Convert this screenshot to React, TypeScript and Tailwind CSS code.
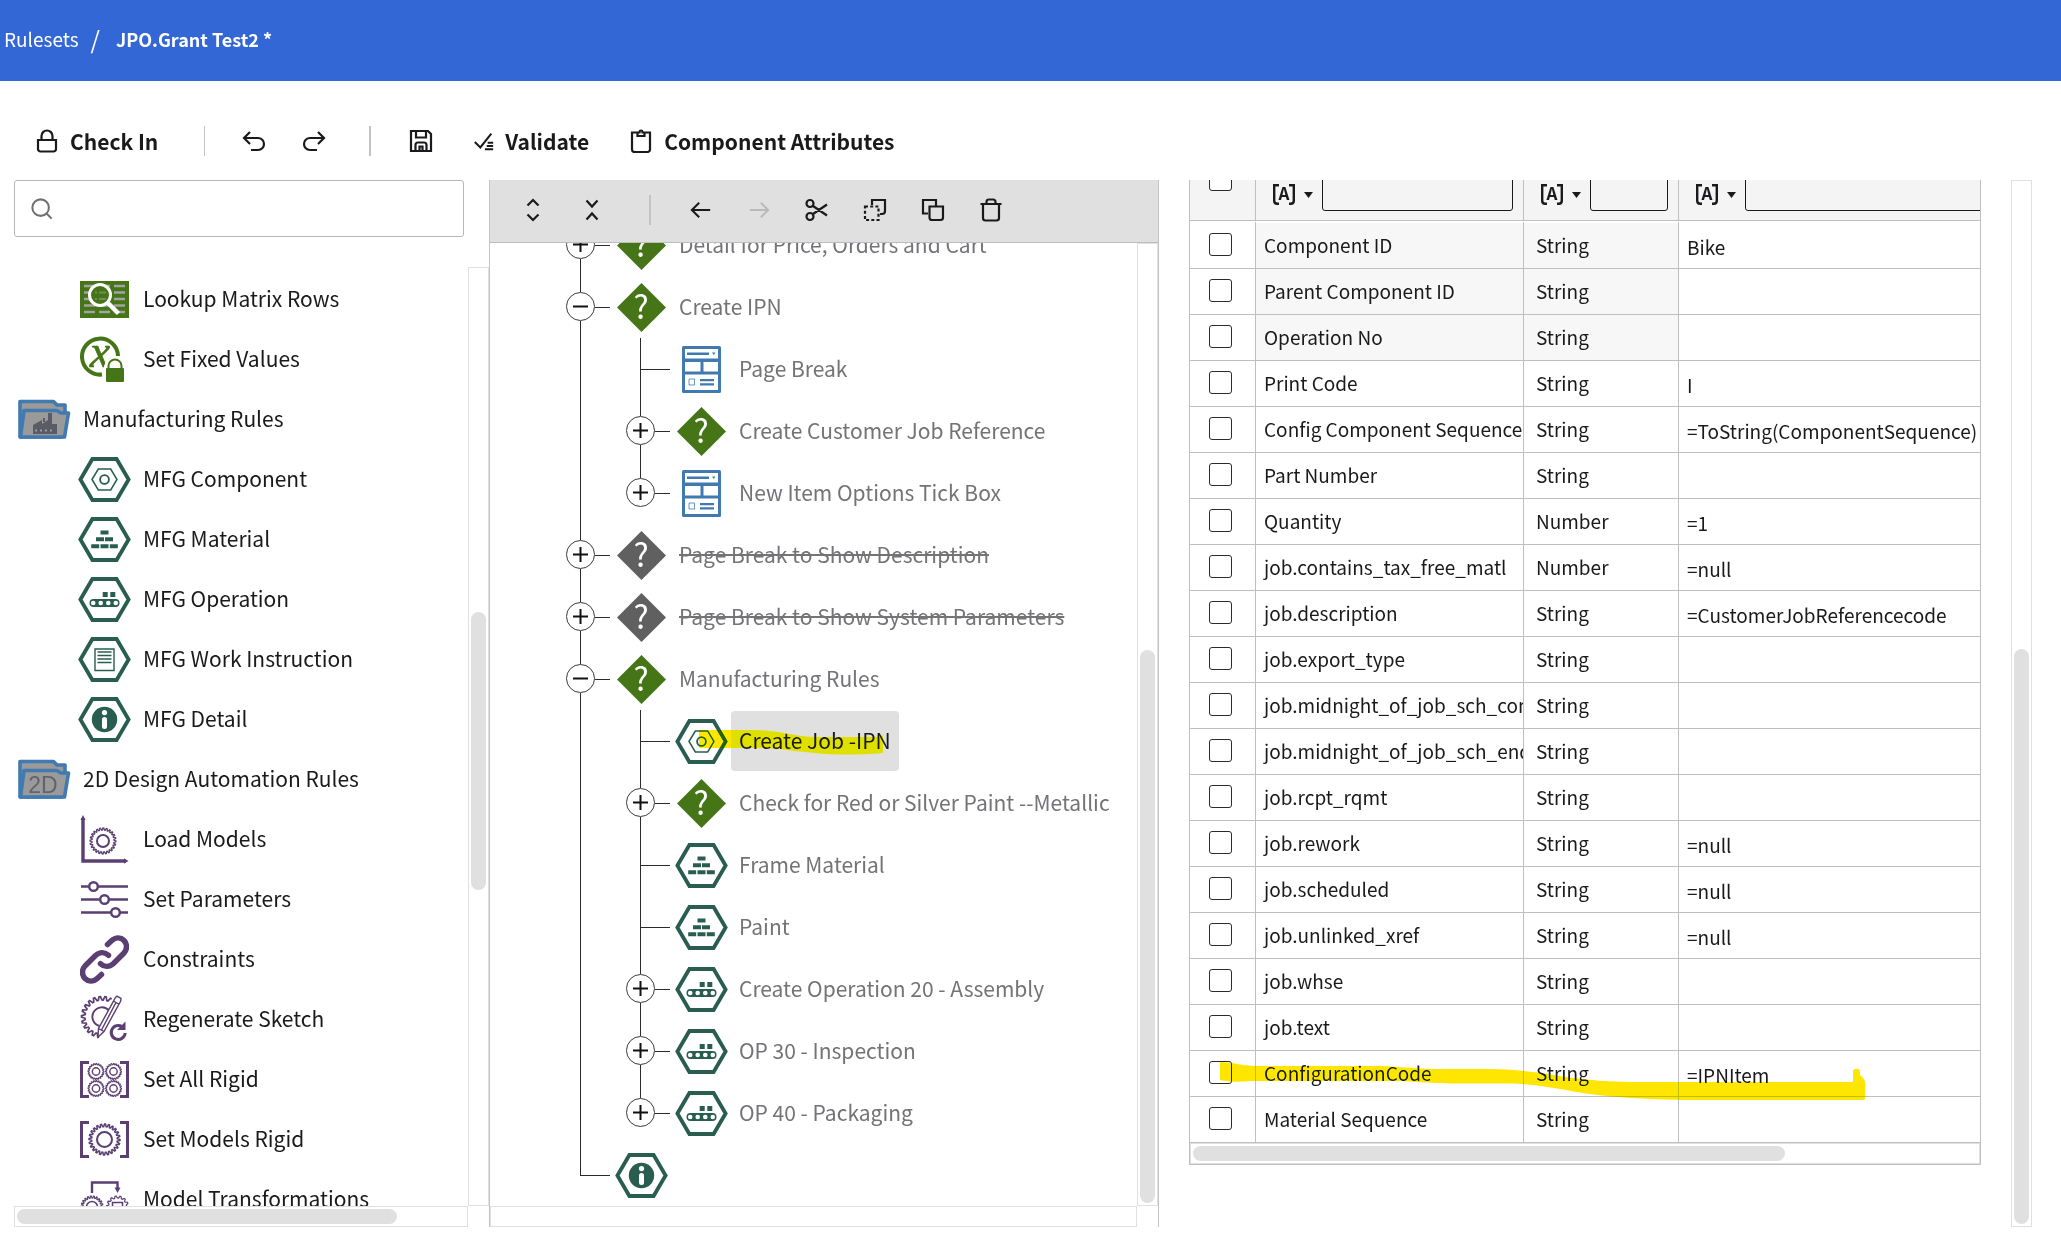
import { Fragment } from 'react';
import type { ReactNode } from 'react';

type IconName =
  | 'lookup'
  | 'fixed'
  | 'mfgFolder'
  | 'component'
  | 'material'
  | 'operation'
  | 'instruction'
  | 'detail'
  | 'designFolder'
  | 'load'
  | 'parameters'
  | 'constraints'
  | 'regenerate'
  | 'allRigid'
  | 'modelsRigid'
  | 'transform'
  | 'question'
  | 'questionOff'
  | 'page';

const GREEN = '#457516';
const TEAL = '#285d50';
const PURPLE = '#5b3f73';
const BLUE = '#417ab0';

function gearPath(
  cx: number,
  cy: number,
  outer: number,
  inner: number,
  teeth: number,
  from = 0,
  to = 360,
) {
  const step = 360 / (teeth * 4);
  const points: string[] = [];
  for (let i = 0; from + i * step <= to + 0.01; i++) {
    const angle = ((from + i * step) * Math.PI) / 180;
    const r = i % 4 < 2 ? outer : inner;
    points.push(
      `${(cx + r * Math.cos(angle)).toFixed(2)} ${(cy + r * Math.sin(angle)).toFixed(2)}`,
    );
  }
  return `M${points.join('L')}${to - from === 360 ? 'Z' : ''}`;
}

function Hexagon({ children }: { children: ReactNode }) {
  return (
    <svg width="53" height="45" viewBox="0 0 53 45" fill={TEAL}>
      <path
        d="M2.4 22.5 14.4 2h24.2l12 20.5-12 20.5H14.4Z"
        fill="#fff"
        stroke={TEAL}
        strokeWidth="3.8"
      />
      {children}
    </svg>
  );
}

function Folder({ children }: { children: ReactNode }) {
  return (
    <svg width="53" height="40" viewBox="0 0 53 40">
      <g fill="#9a9a9a" stroke={BLUE} strokeWidth="3.6" strokeLinejoin="round">
        <path d="M2 38V2.500h33.500l3.500 3.500h8v8l-3 24Z" />
        <path d="M6 11.500h32.500l4.500 2.500h7.500L46.500 38H2.500Z" />
      </g>
      {children}
    </svg>
  );
}

function Diamond({ fill }: { fill: string }) {
  return (
    <svg width="49" height="49" viewBox="0 0 49 49">
      <path d="M24.500 0 49 24.500 24.500 49 0 24.500Z" fill={fill} />
      <text
        x="24"
        y="36"
        fontSize="32"
        fill="#fff"
        textAnchor="middle"
        fontFamily="'Noto Sans CJK SC', sans-serif"
      >
        ?
      </text>
    </svg>
  );
}

function Brackets({ children }: { children: ReactNode }) {
  return (
    <svg width="49" height="37" viewBox="0 0 49 37" fill="none" stroke={PURPLE}>
      <path d="M9 1.500H1.500v34H9M40 1.500h7.500v34H40" strokeWidth="3" />
      {children}
    </svg>
  );
}

function RuleIcon({ name }: { name: IconName }) {
  switch (name) {
    case 'lookup':
      return (
        <svg width="49" height="37" viewBox="0 0 49 37">
          <path d="M0 0h49v37H0Z" fill={GREEN} />
          <path
            d="M4 5h11M19 5h11M34 5h11M4 11.500h11M19 11.500h11M34 11.500h11M4 18h11M19 18h11M34 18h11M4 24.500h11M19 24.500h11M34 24.500h11M4 31h11M19 31h11M34 31h11"
            stroke="#a3a3a3"
            strokeWidth="2.400"
          />
          <circle cx="20" cy="14" r="10.500" fill={GREEN} stroke="#fff" strokeWidth="3" />
          <path d="M15 11.500h2M19 11.500h7M15 18h2M19 18h7" stroke="#a3a3a3" strokeWidth="2" opacity="0.5" />
          <path d="m27.500 21.500 11 11" stroke="#fff" strokeWidth="4.500" />
        </svg>
      );
    case 'fixed':
      return (
        <svg width="49" height="46" viewBox="0 0 49 46">
          <path
            d="M38 20A18 18 0 1 0 22 38.500"
            fill="none"
            stroke={GREEN}
            strokeWidth="4"
          />
          <text
            x="20"
            y="31"
            fontSize="46"
            fontStyle="italic"
            fill={GREEN}
            stroke={GREEN}
            strokeWidth="0.600"
            textAnchor="middle"
            fontFamily="'Liberation Serif', serif"
          >
            x
          </text>
          <path d="M24 30q2-8 10-9 9 1 10 9v16H24Z" fill="#fff" />
          <path
            d="M28.500 33v-3a6.500 6.500 0 0 1 13 0v3"
            fill="none"
            stroke={GREEN}
            strokeWidth="2"
          />
          <rect x="26" y="32" width="18" height="14" rx="1" fill={GREEN} />
        </svg>
      );
    case 'mfgFolder':
      return (
        <Folder>
          <path
            d="M15 35V26l9-5v4l6-4V14h4v11h5v10ZM25 19h2v4h-2Z"
            fill="#5b5b66"
          />
          <path d="M17 31.500h18" stroke="#9a9a9a" strokeWidth="2" strokeDasharray="2 3" />
        </Folder>
      );
    case 'designFolder':
      return (
        <Folder>
          <text
            x="25"
            y="34"
            fontSize="23"
            fill="#63636b"
            textAnchor="middle"
            fontFamily="'Liberation Sans', sans-serif"
          >
            2D
          </text>
        </Folder>
      );
    case 'component':
      return (
        <Hexagon>
          <path
            d="M14 22.500 20.300 12h12.400L39 22.500 32.700 33H20.300Z"
            fill="none"
            stroke={TEAL}
            strokeWidth="1.500"
          />
          <circle cx="26.500" cy="22.500" r="4.400" fill="none" stroke={TEAL} strokeWidth="1.800" />
        </Hexagon>
      );
    case 'material':
      return (
        <Hexagon>
          <path d="M22.500 13.500h8v4h-8ZM18 20.300h8v4h-8ZM27 20.300h8v4h-8ZM13.200 27.200h8v4h-8ZM22.500 27.200h8v4h-8ZM31.800 27.200h8v4h-8Z" />
        </Hexagon>
      );
    case 'operation':
      return (
        <Hexagon>
          <path d="M24.700 15h5v5h-5ZM32.300 15h5v5h-5Z" />
          <rect x="11.500" y="22" width="30" height="8" rx="4" />
          <g fill="#fff">
            <circle cx="15.200" cy="26" r="2.300" />
            <circle cx="22.700" cy="26" r="2.300" />
            <circle cx="30.300" cy="26" r="2.300" />
            <circle cx="37.800" cy="26" r="2.300" />
          </g>
        </Hexagon>
      );
    case 'instruction':
      return (
        <Hexagon>
          <path
            d="M17 12h19v21.500H17ZM19.500 15h14M19.500 18.500h14M19.500 22h14M19.500 25.500h14"
            fill="none"
            stroke={TEAL}
            strokeWidth="1.400"
          />
        </Hexagon>
      );
    case 'detail':
      return (
        <Hexagon>
          <circle cx="26.500" cy="22.500" r="12.700" />
          <circle cx="26.500" cy="15.600" r="2.600" fill="#fff" />
          <rect x="24" y="20" width="5" height="12" rx="2.500" fill="#fff" />
        </Hexagon>
      );
    case 'load':
      return (
        <svg width="49" height="49" viewBox="0 0 49 49" fill="none" stroke={PURPLE}>
          <path d="M3 3v43h42" strokeWidth="3.400" />
          <path d="M0.500 5 3 0l2.500 5ZM44 43.200l4.500 2.800-4.500 2.800Z" fill={PURPLE} stroke="none" />
          <path d={gearPath(23, 26, 13, 11, 24)} strokeWidth="1.300" />
          <circle cx="23" cy="26" r="6" strokeWidth="2" />
        </svg>
      );
    case 'parameters':
      return (
        <svg width="49" height="37" viewBox="0 0 49 37" stroke={PURPLE}>
          <path d="M1 5.500h47M1 18.500h47M1 31.500h47" strokeWidth="2.400" />
          <g fill="#fff" strokeWidth="2.400">
            <circle cx="13.500" cy="5.500" r="4.300" />
            <circle cx="24.500" cy="18.500" r="4.300" />
            <circle cx="35.500" cy="31.500" r="4.300" />
          </g>
        </svg>
      );
    case 'constraints':
      return (
        <svg
          width="49"
          height="49"
          viewBox="0 0 49 49"
          fill="none"
          stroke={PURPLE}
          strokeWidth="5.500"
          strokeLinecap="round"
        >
          <path d="m27.500 9.500 4-3.700c4.500-4 9.500-3.300 12.500-.300 3.500 3.700 3.200 9 0 12.500L33.500 28.500c-4.500 4-9.500 3.500-13 .200" />
          <path d="m21.500 39.500-4 3.700c-4.500 4-9.500 3.300-12.500.300-3.500-3.700-3.200-9 0-12.500L15.500 20.500c4.500-4 9.500-3.500 13-.200" />
        </svg>
      );
    case 'regenerate':
      return (
        <svg width="49" height="49" viewBox="0 0 49 49" fill="none" stroke={PURPLE}>
          <path d={gearPath(22, 22, 20.500, 17, 22, 98, 302)} strokeWidth="1.700" />
          <path d="M29 15.500a9.500 9.500 0 1 0-9.500 15.500" strokeWidth="1.900" />
          <path
            d="m35.500 2.500 1.500-1.300 4 2.300-.300 2.500L24 36.500l-6 5.500.500-8.500ZM33.500 6l5 3M18.500 33.500l5.500 3M36 7.500 21.500 35"
            fill="#fff"
            strokeWidth="1.400"
          />
          <path d="M44 33.500a7 7 0 1 0 1.200 4.500" strokeWidth="3" />
          <path d="M45.500 26.500v8.500H37Z" fill={PURPLE} stroke="none" />
        </svg>
      );
    case 'allRigid':
      return (
        <Brackets>
          {[
            [16, 10.5],
            [33.5, 10.5],
            [16, 27.5],
            [33.5, 27.5],
          ].map(([x, y]) => (
            <Fragment key={`${x}-${y}`}>
              <path d={gearPath(x, y, 8, 6.8, 20)} strokeWidth="1.100" />
              <circle cx={x} cy={y} r="3.700" strokeWidth="1.400" />
            </Fragment>
          ))}
        </Brackets>
      );
    case 'modelsRigid':
      return (
        <Brackets>
          <path d={gearPath(24.5, 18.5, 15.5, 12.8, 24)} strokeWidth="1.500" />
          <circle cx="24.500" cy="18.500" r="7.500" strokeWidth="2" />
        </Brackets>
      );
    case 'transform':
      return (
        <svg width="49" height="37" viewBox="0 0 49 37" fill="none" stroke={PURPLE}>
          <path d="M12 12V1.500h25.500V8" strokeWidth="2.400" />
          <path d="M34.500 6.500h6l-3 5.500Z" fill={PURPLE} stroke="none" />
          <path d={gearPath(12, 26, 11, 9, 22)} strokeWidth="1.200" />
          <circle cx="12" cy="26" r="5.500" strokeWidth="1.500" />
          <path d={gearPath(37.5, 26, 11, 9, 14)} strokeWidth="1.200" />
          <path d="M32.500 21.500h10v10h-10Z" strokeWidth="1.500" />
        </svg>
      );
    case 'question':
      return <Diamond fill={GREEN} />;
    case 'questionOff':
      return <Diamond fill="#606060" />;
    case 'page':
      return (
        <svg width="39" height="47" viewBox="0 0 39 47" fill={BLUE}>
          <rect width="39" height="47" rx="1.500" />
          <path
            d="M3 3h33v9.500H3ZM3 16h15.500v9.500H3ZM21.500 16H36v9.500H21.500ZM3 28.500h33V44H3Z"
            fill="#fff"
          />
          <path d="M5 6.500h22v2.500H5ZM30 6.500h3.500l-1.700 2.500ZM18 33h14v2.200H18ZM18 37.200h14v2.200H18Z" />
          <path d="M7 33h5.500v6H7Z" fill="none" stroke={BLUE} strokeWidth="0.800" />
        </svg>
      );
  }
}

const strokeIcons = {
  lock: 'M3 11h18v9a2.500 2.500 0 0 1-2.500 2.500h-13A2.500 2.500 0 0 1 3 20ZM6.500 11V7a5.500 5.500 0 0 1 11 0v4',
  undo: 'M8 3 2 9l6 6M2 9h14a6 6 0 0 1 0 12H9',
  redo: 'm16 3 6 6-6 6M22 9H8a6 6 0 0 0 0 12h7',
  save: 'M2 2h17l3 3v17H2ZM7 2v6.500h10V2M6.500 22v-6q0-2.500 2.500-2.500h6q2.500 0 2.500 2.500v6M10.500 17.500h3V22h-3Z',
  validate: 'm2 13 6 6L20 4M16 14h6M15 17.500h7M13 21h9',
  clipboard: 'M8.500 3.500H3v17A2.500 2.500 0 0 0 5.500 23h13a2.500 2.500 0 0 0 2.500-2.500v-17h-5.500M8.500 7V3.500h2q0-2 1.500-2t1.500 2h2V7Z',
  expand: 'm6.500 7.500 5.500-5.500 5.500 5.500M6.500 16.500l5.500 5.500 5.500-5.500',
  collapse: 'm6.500 2.500 5.500 6 5.500-6M6.500 21.500l5.500-6 5.500 6',
  back: 'M22 12H3M10 4l-8 8 8 8',
  forward: 'M2 12h19M14 4l8 8-8 8',
  cut: 'M8 8l14 9.500M8 16 22 6.500M5 2a3.500 3.500 0 1 1 0 7 3.500 3.500 0 0 1 0-7ZM5 15a3.500 3.500 0 1 1 0 7 3.500 3.500 0 0 1 0-7Z',
  copy: 'M7 15.500H2V2h13v6M8.500 8.500h13.500v11q0 2.500-2.500 2.500H11q-2.500 0-2.500-2.500Z',
  trash: 'M1.500 6h21M4 6v14q0 2.500 2.500 2.500h11q2.500 0 2.500-2.500V6M7.500 6V4q0-2.500 2.500-2.500h4q2.500 0 2.500 2.500v2',
  search: 'M10.500 1.500a9 9 0 1 1 0 18 9 9 0 0 1 0-18ZM17 17l5.500 5.500',
};

function StrokeIcon({
  name,
  className = 'size-6',
}: {
  name: keyof typeof strokeIcons;
  className?: string;
}) {
  return (
    <svg
      viewBox="0 0 24 24"
      fill="none"
      stroke="currentColor"
      strokeWidth="2.200"
      className={`shrink-0 ${className}`}
    >
      <path d={strokeIcons[name]} />
    </svg>
  );
}

function IconButton({
  label,
  disabled,
  children,
}: {
  label: string;
  disabled?: boolean;
  children: ReactNode;
}) {
  return (
    <button
      type="button"
      aria-label={label}
      disabled={disabled}
      className="flex size-6 shrink-0 cursor-pointer items-center justify-center disabled:cursor-default disabled:text-[#b9b9bb]"
    >
      {children}
    </button>
  );
}

/* start and size are percentages of the track */
function Scrollbar({
  vertical,
  start = 0,
  size = 0,
}: {
  vertical?: boolean;
  start?: number;
  size?: number;
}) {
  return (
    <div
      className={
        vertical
          ? 'flex w-[21px] shrink-0 flex-col border border-[#e0e0e0] p-[2px]'
          : 'flex h-[21px] min-w-0 flex-1 border border-[#e0e0e0] p-[2px]'
      }
    >
      <div style={vertical ? { height: `${start}%` } : { width: `${start}%` }} />
      <div
        className="rounded-full bg-[#e0e0e0]"
        style={vertical ? { height: `${size}%` } : { width: `${size}%` }}
      />
    </div>
  );
}

const palette: { icon: IconName; label: string; group?: boolean }[] = [
  { icon: 'lookup', label: 'Lookup Matrix Rows' },
  { icon: 'fixed', label: 'Set Fixed Values' },
  { icon: 'mfgFolder', label: 'Manufacturing Rules', group: true },
  { icon: 'component', label: 'MFG Component' },
  { icon: 'material', label: 'MFG Material' },
  { icon: 'operation', label: 'MFG Operation' },
  { icon: 'instruction', label: 'MFG Work Instruction' },
  { icon: 'detail', label: 'MFG Detail' },
  { icon: 'designFolder', label: '2D Design Automation Rules', group: true },
  { icon: 'load', label: 'Load Models' },
  { icon: 'parameters', label: 'Set Parameters' },
  { icon: 'constraints', label: 'Constraints' },
  { icon: 'regenerate', label: 'Regenerate Sketch' },
  { icon: 'allRigid', label: 'Set All Rigid' },
  { icon: 'modelsRigid', label: 'Set Models Rigid' },
  { icon: 'transform', label: 'Model Transformations' },
];

function PalettePanel() {
  return (
    <section className="flex min-w-0 flex-col pl-[14px]">
      <div className="mr-[25px] flex h-[57px] shrink-0 items-center gap-3 rounded-[3px] border border-[#b7b7ba] pl-4">
        <StrokeIcon name="search" className="size-[22px] text-[#6f6f76]" />
        <input
          type="search"
          aria-label="Search rules"
          className="h-full min-w-0 flex-1 text-[21px] outline-none"
        />
      </div>
      <div className="mt-[30px] flex min-h-0 flex-1">
        <ul className="min-w-0 flex-1 overflow-hidden pt-[2px]">
          {palette.map(({ icon, label, group }) => (
            <li
              key={label}
              className={`flex h-[60px] items-center whitespace-nowrap ${group ? 'pl-1' : 'pl-16'}`}
            >
              <span className="flex w-[53px] shrink-0 justify-center">
                <RuleIcon name={icon} />
              </span>
              <span className="ml-3 pb-[2px] text-[21px] leading-8">{label}</span>
            </li>
          ))}
        </ul>
        <Scrollbar vertical start={36.7} size={29.7} />
      </div>
      <div className="flex shrink-0 pr-[21px]">
        <Scrollbar size={84.8} />
      </div>
    </section>
  );
}

interface TreeNode {
  level: 1 | 2;
  toggle?: '+' | '-';
  icon: IconName;
  label?: string;
  disabled?: boolean;
  selected?: boolean;
  last?: boolean;
}

const tree: TreeNode[] = [
  { level: 1, toggle: '+', icon: 'question', label: 'Detail for Price, Orders and Cart' },
  { level: 1, toggle: '-', icon: 'question', label: 'Create IPN' },
  { level: 2, icon: 'page', label: 'Page Break' },
  { level: 2, toggle: '+', icon: 'question', label: 'Create Customer Job Reference' },
  { level: 2, toggle: '+', icon: 'page', label: 'New Item Options Tick Box', last: true },
  { level: 1, toggle: '+', icon: 'questionOff', label: 'Page Break to Show Description', disabled: true },
  { level: 1, toggle: '+', icon: 'questionOff', label: 'Page Break to Show System Parameters', disabled: true },
  { level: 1, toggle: '-', icon: 'question', label: 'Manufacturing Rules' },
  { level: 2, icon: 'component', label: 'Create Job -IPN', selected: true },
  { level: 2, toggle: '+', icon: 'question', label: 'Check for Red or Silver Paint --Metallic' },
  { level: 2, icon: 'material', label: 'Frame Material' },
  { level: 2, icon: 'material', label: 'Paint' },
  { level: 2, toggle: '+', icon: 'operation', label: 'Create Operation 20 - Assembly' },
  { level: 2, toggle: '+', icon: 'operation', label: 'OP 30 - Inspection' },
  { level: 2, toggle: '+', icon: 'operation', label: 'OP 40 - Packaging', last: true },
  { level: 1, icon: 'detail', last: true },
];

function Branch({ toggle, last }: { toggle?: '+' | '-'; last?: boolean }) {
  if (!toggle) {
    return (
      <span className="flex w-[49px] shrink-0 flex-col self-stretch pl-[14px]">
        <span className="h-8 w-[30px] shrink-0 border-b border-l border-[#2b2b2e]" />
        {!last && <span className="w-[30px] flex-1 border-l border-[#2b2b2e]" />}
      </span>
    );
  }
  return (
    <span className="flex w-[49px] shrink-0 items-center self-stretch">
      <span className="flex flex-col self-stretch">
        <span className="ml-[14px] h-4 w-px bg-[#2b2b2e]" />
        <button
          type="button"
          aria-label={toggle === '+' ? 'Expand' : 'Collapse'}
          className="flex size-[29px] cursor-pointer items-center justify-center rounded-full border border-[#3b3b40] bg-white"
        >
          <svg width="15" height="15" viewBox="0 0 15 15" stroke="#111" strokeWidth="2">
            <path d={toggle === '+' ? 'M0 7.500h15M7.500 0v15' : 'M0 7.500h15'} />
          </svg>
        </button>
        {!last && <span className="ml-[14px] w-px flex-1 bg-[#2b2b2e]" />}
      </span>
      <span className="h-px w-[15px] bg-[#2b2b2e]" />
    </span>
  );
}

function TreeRow({ node }: { node: TreeNode }) {
  let text = 'text-[#737378]';
  if (node.disabled) text = 'text-[#737378] line-through';
  if (node.selected) text = 'bg-[#e0e0e0] text-[#1a1a1c]';

  return (
    <li className="flex h-[62px] items-center whitespace-nowrap">
      {node.level === 2 && (
        <span className="flex w-[60px] shrink-0 self-stretch pl-[14px]">
          <span className="w-px bg-[#2b2b2e]" />
        </span>
      )}
      <Branch toggle={node.toggle} last={node.last} />
      <span className="flex w-[53px] shrink-0 justify-center">
        <RuleIcon name={node.icon} />
      </span>
      {node.label && (
        <button
          type="button"
          className={`relative ml-[3px] h-[60px] cursor-pointer rounded px-2 pb-[3px] text-[21px] leading-8 ${text}`}
        >
          {node.label}
          {node.selected && (
            <svg
              className="pointer-events-none absolute top-4 -left-8 mix-blend-darken"
              width="186"
              height="30"
              viewBox="0 0 186 30"
              fill="#ffe600"
            >
              <path d="M0 3h56c28 1 34 6 60 7h56q8 0 12-2v18c-24 2-50 2-68 0C90 24 78 21 56 21H0Z" />
            </svg>
          )}
        </button>
      )}
    </li>
  );
}

function TreePanel() {
  return (
    <section className="flex min-w-0 flex-col border-x border-[#c4c4c6]">
      <div className="flex h-[63px] shrink-0 items-center border-b border-[#bdbdc0] bg-[#e0e0e0] pb-[2px] pl-[31px]">
        <div className="flex items-center gap-[35px]">
          <IconButton label="Expand all">
            <StrokeIcon name="expand" />
          </IconButton>
          <IconButton label="Collapse all">
            <StrokeIcon name="collapse" />
          </IconButton>
        </div>
        <span className="ml-[45px] h-[30px] w-[2px] bg-[#c4c4c8]" />
        <div className="ml-[38px] flex items-center gap-[34px]">
          <IconButton label="Back">
            <StrokeIcon name="back" className="size-[22px]" />
          </IconButton>
          <IconButton label="Forward" disabled>
            <StrokeIcon name="forward" className="size-[22px]" />
          </IconButton>
          <IconButton label="Cut">
            <StrokeIcon name="cut" />
          </IconButton>
          <IconButton label="Duplicate">
            <svg viewBox="0 0 24 24" className="size-6" fill="none" stroke="currentColor" strokeWidth="2.200">
              <path d="M9 7V2h13v11q0 3-3 3h-2" />
              <path d="M2 8.500h13.500V22H2Z" strokeDasharray="3 2.200" />
            </svg>
          </IconButton>
          <IconButton label="Copy">
            <StrokeIcon name="copy" />
          </IconButton>
          <IconButton label="Delete">
            <StrokeIcon name="trash" />
          </IconButton>
        </div>
      </div>
      <div className="flex min-h-0 flex-1">
        <div className="min-w-0 flex-1 overflow-hidden pl-[76px]">
          <ul className="-mt-[29px]">
            {tree.map((node, i) => (
              <TreeRow key={i} node={node} />
            ))}
          </ul>
        </div>
        <Scrollbar vertical start={42.2} size={57.8} />
      </div>
      <div className="flex shrink-0 pr-[21px]">
        <Scrollbar />
      </div>
    </section>
  );
}

const attributes: { name: string; type: string; value?: string; locked?: boolean }[] = [
  { name: 'Component ID', type: 'String', value: 'Bike', locked: true },
  { name: 'Parent Component ID', type: 'String', locked: true },
  { name: 'Operation No', type: 'String', locked: true },
  { name: 'Print Code', type: 'String', value: 'I' },
  { name: 'Config Component Sequence', type: 'String', value: '=ToString(ComponentSequence)' },
  { name: 'Part Number', type: 'String' },
  { name: 'Quantity', type: 'Number', value: '=1' },
  { name: 'job.contains_tax_free_matl', type: 'Number', value: '=null' },
  { name: 'job.description', type: 'String', value: '=CustomerJobReferencecode' },
  { name: 'job.export_type', type: 'String' },
  { name: 'job.midnight_of_job_sch_com', type: 'String' },
  { name: 'job.midnight_of_job_sch_end', type: 'String' },
  { name: 'job.rcpt_rqmt', type: 'String' },
  { name: 'job.rework', type: 'String', value: '=null' },
  { name: 'job.scheduled', type: 'String', value: '=null' },
  { name: 'job.unlinked_xref', type: 'String', value: '=null' },
  { name: 'job.whse', type: 'String' },
  { name: 'job.text', type: 'String' },
  { name: 'ConfigurationCode', type: 'String', value: '=IPNItem' },
  { name: 'Material Sequence', type: 'String' },
];

const checkboxClass =
  'block size-[23px] cursor-pointer appearance-none rounded-[3px] border border-[#2b2b2e] bg-white checked:bg-[#3467d6]';

function FilterCell({ label, inputClass }: { label: string; inputClass: string }) {
  return (
    <th className="overflow-hidden border-b border-l border-[#bfbfc2] p-0 align-bottom font-normal">
      <div className="flex items-end pb-[9px] pl-[17px]">
        <button
          type="button"
          aria-label={`${label} filter type`}
          className="flex shrink-0 cursor-pointer items-center gap-[9px] pb-[6px]"
        >
          <svg width="22" height="21" viewBox="0 0 22 21" fill="none" stroke="#1a1a1c" strokeWidth="2.400">
            <path d="M6 1.200H1.200v15.500q0 3 3 3H6M16 1.200h4.800v15.500q0 3-3 3H16" />
            <text
              x="11"
              y="16"
              fontSize="17"
              fontWeight="700"
              fill="#1a1a1c"
              stroke="none"
              textAnchor="middle"
              fontFamily="'Noto Sans CJK SC', sans-serif"
            >
              A
            </text>
          </svg>
          <svg width="9" height="6" viewBox="0 0 9 6" fill="#1a1a1c">
            <path d="M0 0h9L4.500 6Z" />
          </svg>
        </button>
        <input
          type="text"
          aria-label={`Filter ${label}`}
          className={`ml-[9px] h-10 rounded-[3px] border border-[#1a1a1c] px-2 text-[19px] outline-none ${inputClass}`}
        />
      </div>
    </th>
  );
}

function AttributesPanel() {
  return (
    <section className="flex min-w-0 justify-between pr-[29px] pl-[30px]">
      <div className="mr-[30px] min-w-0 flex-1 overflow-hidden">
        <div className="border border-t-0 border-[#bfbfc2]">
          <table className="-mt-[19px] w-full table-fixed border-separate border-spacing-0 text-left text-[19px] leading-6">
            <colgroup>
              <col className="w-[65px]" />
              <col className="w-[268px]" />
              <col className="w-[155px]" />
              <col />
            </colgroup>
            <thead>
              <tr className="h-[60px] bg-[#f4f4f4]">
                <th className="border-b border-[#bfbfc2] pt-[7px] pr-0 pb-0 pl-[19px] align-top">
                  <input type="checkbox" aria-label="Select all" className={checkboxClass} />
                </th>
                <FilterCell label="Name" inputClass="mr-[10px] min-w-0 flex-1" />
                <FilterCell label="Type" inputClass="mr-[10px] min-w-0 flex-1" />
                <FilterCell label="Value" inputClass="w-[400px] shrink-0" />
              </tr>
            </thead>
            <tbody>
              {attributes.map(({ name, type, value, locked }, i) => {
                const cell = i === 0
                  ? 'h-12 border-t-2 border-t-white border-b border-b-[#bfbfc2]'
                  : 'h-[46px] border-b border-b-[#bfbfc2]';
                const shade = locked ? 'bg-[#f7f7f7]' : '';
                return (
                  <tr key={name}>
                    <td className={`relative p-0 pb-[2px] pl-[19px] ${cell}`}>
                      <input type="checkbox" aria-label={`Select ${name}`} className={checkboxClass} />
                      {name === 'ConfigurationCode' && (
                        <svg
                          className="pointer-events-none absolute top-[10px] left-[30px] z-10 mix-blend-darken"
                          width="646"
                          height="40"
                          viewBox="0 0 646 40"
                          fill="#ffe600"
                        >
                          <path d="M0 1 12 2q12 3 24 3h117c22 0 34 2 57 3h60c18 0 36 2 58 5 24 4 40 7 82 8h223V10q0-2 2-2h3q2 0 2 3v3q5 4 5 8v15q0 2-3 2H480c-34 0-58-1-82-3-40-3-58-10-96-13-22-1-60 0-86-1-24-1-30-2-46-2H32Q12 22 0 19Z" />
                        </svg>
                      )}
                    </td>
                    <td className={`overflow-hidden border-l border-l-[#bfbfc2] p-0 pb-[2px] pl-2 whitespace-nowrap ${cell} ${shade}`}>
                      {name}
                    </td>
                    <td className={`border-l border-l-[#bfbfc2] p-0 pb-[2px] pl-3 ${cell} ${shade}`}>
                      {type}
                    </td>
                    <td className={`overflow-hidden border-l border-l-[#bfbfc2] p-0 pt-[2px] pl-2 whitespace-nowrap ${cell}`}>
                      {value}
                    </td>
                  </tr>
                );
              })}
            </tbody>
          </table>
          <div className="flex">
            <Scrollbar size={75.5} />
          </div>
        </div>
      </div>
      <Scrollbar vertical start={44.8} size={55.2} />
    </section>
  );
}

function Toolbar() {
  return (
    <div className="flex h-[99px] shrink-0 items-center pt-5 pl-[35px] text-[21px] leading-8 font-bold">
      <button type="button" className="flex cursor-pointer items-center gap-[11px]">
        <StrokeIcon name="lock" />
        Check In
      </button>
      <span className="ml-[46px] h-[30px] w-px bg-[#c4c4c8]" />
      <div className="ml-[37px] flex gap-9">
        <IconButton label="Undo">
          <StrokeIcon name="undo" />
        </IconButton>
        <IconButton label="Redo">
          <StrokeIcon name="redo" />
        </IconButton>
      </div>
      <span className="ml-[43px] h-[30px] w-[2px] bg-[#c4c4c8]" />
      <div className="ml-[38px] flex">
        <IconButton label="Save">
          <StrokeIcon name="save" />
        </IconButton>
      </div>
      <button type="button" className="ml-10 flex cursor-pointer items-center gap-[10px]">
        <StrokeIcon name="validate" className="size-[22px]" />
        Validate
      </button>
      <button type="button" className="ml-10 flex cursor-pointer items-center gap-[11px]">
        <StrokeIcon name="clipboard" />
        Component Attributes
      </button>
    </div>
  );
}

export default function App() {
  return (
    <div className="flex h-screen flex-col overflow-hidden bg-white pb-[30px] font-['Noto_Sans_CJK_SC',sans-serif] text-[#1a1a1c]">
      <header className="flex h-[81px] shrink-0 items-center bg-[#3467d6] pb-1 pl-1 text-[19px] leading-6 text-white">
        <nav className="flex items-center">
          <a href="#rulesets">Rulesets</a>
          <span className="ml-3 text-[24px]">/</span>
          <span className="ml-4 text-[18px] font-bold">JPO.Grant Test2 *</span>
        </nav>
      </header>
      <Toolbar />
      <main className="grid min-h-0 flex-1 grid-cols-[489fr_670fr_902fr] grid-rows-[minmax(0,1fr)]">
        <PalettePanel />
        <TreePanel />
        <AttributesPanel />
      </main>
    </div>
  );
}
